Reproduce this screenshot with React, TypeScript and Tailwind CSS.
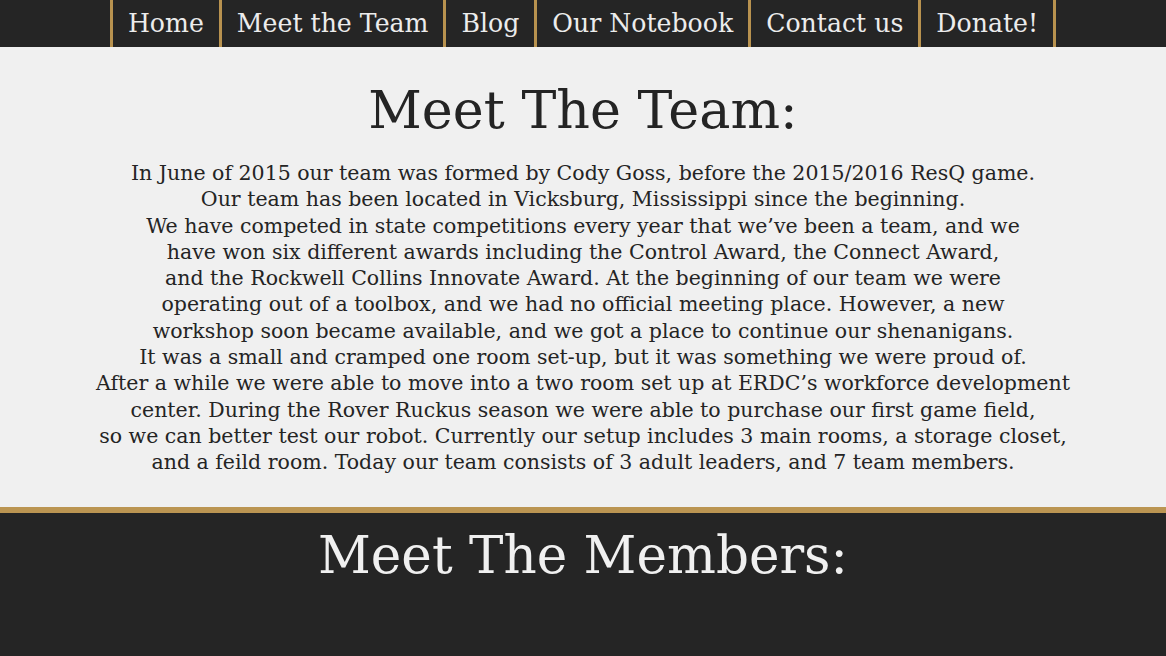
const navItems = ['Home', 'Meet the Team', 'Blog', 'Our Notebook', 'Contact us', 'Donate!'];

const storyLines = [
  'In June of 2015 our team was formed by Cody Goss, before the 2015/2016 ResQ game.',
  'Our team has been located in Vicksburg, Mississippi since the beginning.',
  'We have competed in state competitions every year that we\u2019ve been a team, and we',
  'have won six different awards including the Control Award, the Connect Award,',
  'and the Rockwell Collins Innovate Award. At the beginning of our team we were',
  'operating out of a toolbox, and we had no official meeting place. However, a new',
  'workshop soon became available, and we got a place to continue our shenanigans.',
  'It was a small and cramped one room set-up, but it was something we were proud of.',
  'After a while we were able to move into a two room set up at ERDC\u2019s workforce development',
  'center. During the Rover Ruckus season we were able to purchase our first game field,',
  'so we can better test our robot. Currently our setup includes 3 main rooms, a storage closet,',
  'and a feild room. Today our team consists of 3 adult leaders, and 7 team members.',
];

const serif = { fontFamily: '"DejaVu Serif", "Liberation Serif", serif' };

const App = () => {
  return (
    <div className="min-h-screen bg-[#f0f0f0]" style={serif}>
      {/* Top navigation */}
      <nav className="flex h-[47px] justify-center bg-[#252525]">
        <ul className="flex border-r-[3px] border-[#b8924f]">
          {navItems.map((item) => (
            <li
              key={item}
              className="flex items-center border-l-[3px] border-[#b8924f] px-[15px] text-[25.2px] text-[#ececec]"
            >
              {item}
            </li>
          ))}
        </ul>
      </nav>

      {/* Team story */}
      <section className="bg-[#f0f0f0] pb-[31px] pt-[27px] text-center text-[#242424]">
        <h1 className="text-[52.3px] leading-[72px]">Meet The Team:</h1>
        <p className="mt-[14px] text-[20.5px] leading-[26.3px]">
          {storyLines.map((line) => (
            <span key={line} className="block whitespace-nowrap">
              {line}
            </span>
          ))}
        </p>
      </section>

      {/* Members */}
      <section className="border-t-[6px] border-[#bb9552] bg-[#252525] pb-[80px] text-center">
        <h2 className="pt-[6px] text-[51.6px] leading-[72px] text-[#f0f0f0]">Meet The Members:</h2>
      </section>
    </div>
  );
};

export default App;
